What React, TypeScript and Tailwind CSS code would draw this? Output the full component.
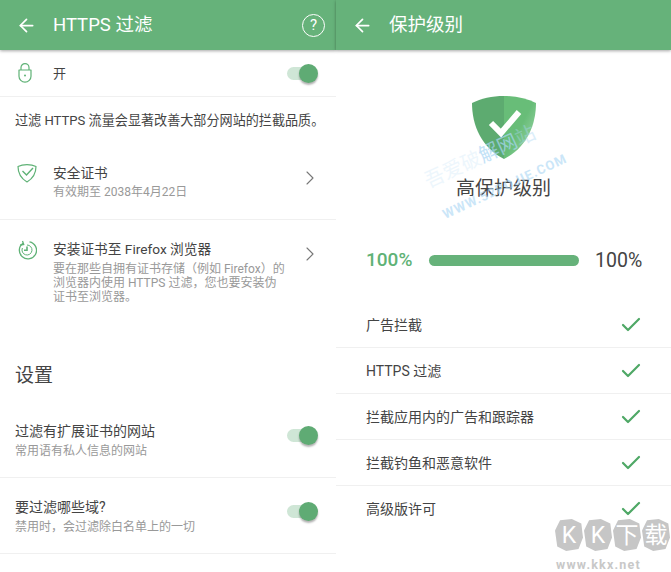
import { ArrowLeft, Check, ChevronRight } from 'lucide-react'

const font = { fontFamily: 'Roboto, "Noto Sans CJK SC", sans-serif' }

function Toggle() {
  return (
    <div className="relative h-[13px] w-[30px] shrink-0 rounded-full bg-[#cfe6d6]">
      <div className="absolute right-[-1px] top-[-3px] h-[19px] w-[19px] rounded-full bg-[#5fab74] shadow-[0_2px_2px_rgba(0,0,0,0.3)]" />
    </div>
  )
}

function Header({ title, help }: { title: string; help?: boolean }) {
  return (
    <div className="relative z-10 flex h-[50px] items-center bg-[#66b27a] pl-[16px] pr-[11px] text-white shadow-[0_1px_3px_rgba(0,0,0,0.35)]">
      <ArrowLeft className="h-[21px] w-[21px]" strokeWidth={2} />
      <span className="ml-[16px] flex-1 text-[18.5px] leading-none">{title}</span>
      {help && (
        <div className="flex h-[23px] w-[23px] items-center justify-center rounded-full border-[1.5px] border-white text-[15px] leading-none">
          ?
        </div>
      )}
    </div>
  )
}

function LockIcon() {
  return (
    <svg width="14" height="20" viewBox="0 0 14 20" fill="none" stroke="#5fb276" strokeWidth="1.2">
      <path d="M3 7V4.6a4 4 0 0 1 8 0V7" />
      <path d="M1 7h12v6.2a6 6 0 0 1-12 0z" strokeLinejoin="round" />
      <circle cx="7" cy="12.5" r="1" fill="#5fb276" stroke="none" />
    </svg>
  )
}

function ShieldIcon() {
  return (
    <svg width="20" height="20" viewBox="0 0 20 20" fill="none" stroke="#5fb276" strokeWidth="1.2">
      <path d="M1 3.5C6 1 14 1 19 3.5C19 11 15 16 10 19C5 16 1 11 1 3.5z" strokeLinejoin="round" />
      <path d="M5.5 8l4 4L16 5" strokeWidth="1.4" />
    </svg>
  )
}

function RefreshIcon() {
  return (
    <svg width="20" height="20" viewBox="0 0 20 20" fill="none" stroke="#5fb276" strokeWidth="1.3">
      <path d="M6 3.2A8.6 8.6 0 1 0 12.5 1.8" />
      <path d="M5.5 1l1.2 3.4L3.2 5" />
      <path d="M10 5a5 5 0 1 1-4.6 3" strokeWidth="1" />
      <path d="M10 6.5v3.8h-3" strokeWidth="1.6" />
    </svg>
  )
}

function Shield() {
  return (
    <svg width="64" height="64" viewBox="0 0 64 64">
      <defs>
        <linearGradient id="fade" x1="0" y1="0" x2="1" y2="1">
          <stop offset="0.5" stopColor="#68bd78" />
          <stop offset="1" stopColor="#a8dcb4" />
        </linearGradient>
      </defs>
      <path d="M32 0C20 0 9 2.5 0 7C0 30 10 52 32 63z" fill="#5dab70" />
      <path d="M32 0C44 0 55 2.5 64 7C64 30 54 52 32 63z" fill="url(#fade)" />
      <path d="M19 27l10 10L47 16" fill="none" stroke="#fff" strokeWidth="6" />
    </svg>
  )
}

function Row({ title, sub }: { title: string; sub: string }) {
  return (
    <div className="flex h-[76px] items-center border-b border-[#f0f0f0] pl-[15px] pr-[19px]">
      <div className="flex-1 pt-[2px]">
        <div className="text-[14px] leading-[20px] text-[#444]">{title}</div>
        <div className="mt-[1px] text-[12px] leading-[18px] text-[#999]">{sub}</div>
      </div>
      <div className="mb-[8px]">
        <Toggle />
      </div>
    </div>
  )
}

const levels = ['广告拦截', 'HTTPS 过滤', '拦截应用内的广告和跟踪器', '拦截钓鱼和恶意软件', '高级版许可']

export default function App() {
  return (
    <div className="relative flex h-[572px] w-[671px] overflow-hidden bg-white" style={font}>
      <div className="w-[336px] shrink-0">
        <Header title="HTTPS 过滤" help />
        <div className="flex h-[47px] items-center border-b border-[#f0f0f0] pl-[18px] pr-[19px]">
          <LockIcon />
          <span className="ml-[21px] flex-1 pt-[2px] text-[13px] text-[#444]">开</span>
          <Toggle />
        </div>
        <div className="flex h-[48px] items-center pl-[15px] text-[13.1px] text-[#444]">
          过滤 HTTPS 流量会显著改善大部分网站的拦截品质。
        </div>
        <div className="relative flex h-[75px] items-center border-b border-[#f0f0f0] pl-[17px] pr-[14px]">
          <div className="mb-[19px]">
            <ShieldIcon />
          </div>
          <div className="ml-[16px] flex-1">
            <div className="text-[13.7px] leading-[20px] text-[#444]">安全证书</div>
            <div className="text-[12px] leading-[18px] text-[#999]">有效期至 2038年4月22日</div>
          </div>
          <ChevronRight className="mb-[8px] h-[24px] w-[24px] text-[#777]" strokeWidth={1.1} />
        </div>
        <div className="flex items-start pl-[17px] pr-[14px] pt-[19px]">
          <div className="pt-[1px]">
            <RefreshIcon />
          </div>
          <div className="ml-[16px] flex-1">
            <div className="text-[13.7px] leading-[20px] text-[#444]">安装证书至 Firefox 浏览器</div>
            <div className="mt-[3px] text-[12px] leading-[14px] text-[#999]">
              要在那些自拥有证书存储（例如 Firefox）的
              <br />
              浏览器内使用 HTTPS 过滤，您也要安装伪
              <br />
              证书至浏览器。
            </div>
          </div>
          <ChevronRight className="mt-[3px] h-[24px] w-[24px] text-[#777]" strokeWidth={1.1} />
        </div>
        <div className="mt-[59px] pl-[15px] text-[19px] leading-[26px] text-[#444]">设置</div>
        <div className="mt-[13px]">
          <Row title="过滤有扩展证书的网站" sub="常用语有私人信息的网站" />
          <Row title="要过滤哪些域?" sub="禁用时，会过滤除白名单上的一切" />
        </div>
      </div>

      <div className="flex-1">
        <Header title="保护级别" />
        <div className="flex flex-col items-center pt-[46px]">
          <Shield />
          <div className="mt-[16px] text-[19px] leading-[26px] text-[#444]">高保护级别</div>
        </div>
        <div className="mt-[44px] flex items-center pl-[30px] pr-[29px]">
          <span className="w-[63px] text-[19px] font-medium text-[#5fb276]">100%</span>
          <div className="h-[11px] w-[150px] rounded-full bg-[#66b27a]" />
          <span className="ml-[16px] text-[19.5px] text-[#444]">100%</span>
        </div>
        <div className="mt-[27px]">
          {levels.map((t) => (
            <div key={t} className="flex h-[46px] items-center border-b border-[#f0f0f0] pl-[30px] pr-[28px] last:border-b-0">
              <span className="flex-1 pt-[1px] text-[14px] text-[#444]">{t}</span>
              <Check className="h-[24px] w-[24px] text-[#4fa866]" strokeWidth={2.2} />
            </div>
          ))}
        </div>
      </div>

      {/* blue forum stamp over the shield */}
      <div className="absolute left-[407px] top-[143px] flex w-[160px] -rotate-[25deg] flex-col items-center text-[#a9d6f5]">
        <span className="text-[20px] leading-[24px]">
          <span className="opacity-20">吾爱破</span>
          <span className="opacity-70">解网</span>
          <span className="opacity-40">站</span>
        </span>
        <span className="mt-[18px] translate-x-[10px] text-[13px] font-bold leading-[16px] tracking-[1px] opacity-60">WWW.52POJIE.COM</span>
      </div>

      {/* KK download logo */}
      <div className="absolute left-[555px] top-[519px] flex flex-col items-start">
        <div className="flex gap-[1px]">
          {['K', 'K', '下', '载'].map((c, i) => (
            <span
              key={i}
              className="flex h-[32px] w-[28px] items-center justify-center bg-[#c6c6c6] text-[23px] leading-none text-white [clip-path:polygon(18%_4%,60%_0,94%_14%,100%_58%,84%_94%,40%_100%,8%_86%,0_36%)]"
            >
              {c}
            </span>
          ))}
        </div>
        <span className="mt-[7px] pl-[1px] text-[12.5px] font-bold leading-[14px] tracking-[1.2px] text-[#c8c8c8]">www.kkx.net</span>
      </div>
    </div>
  )
}
